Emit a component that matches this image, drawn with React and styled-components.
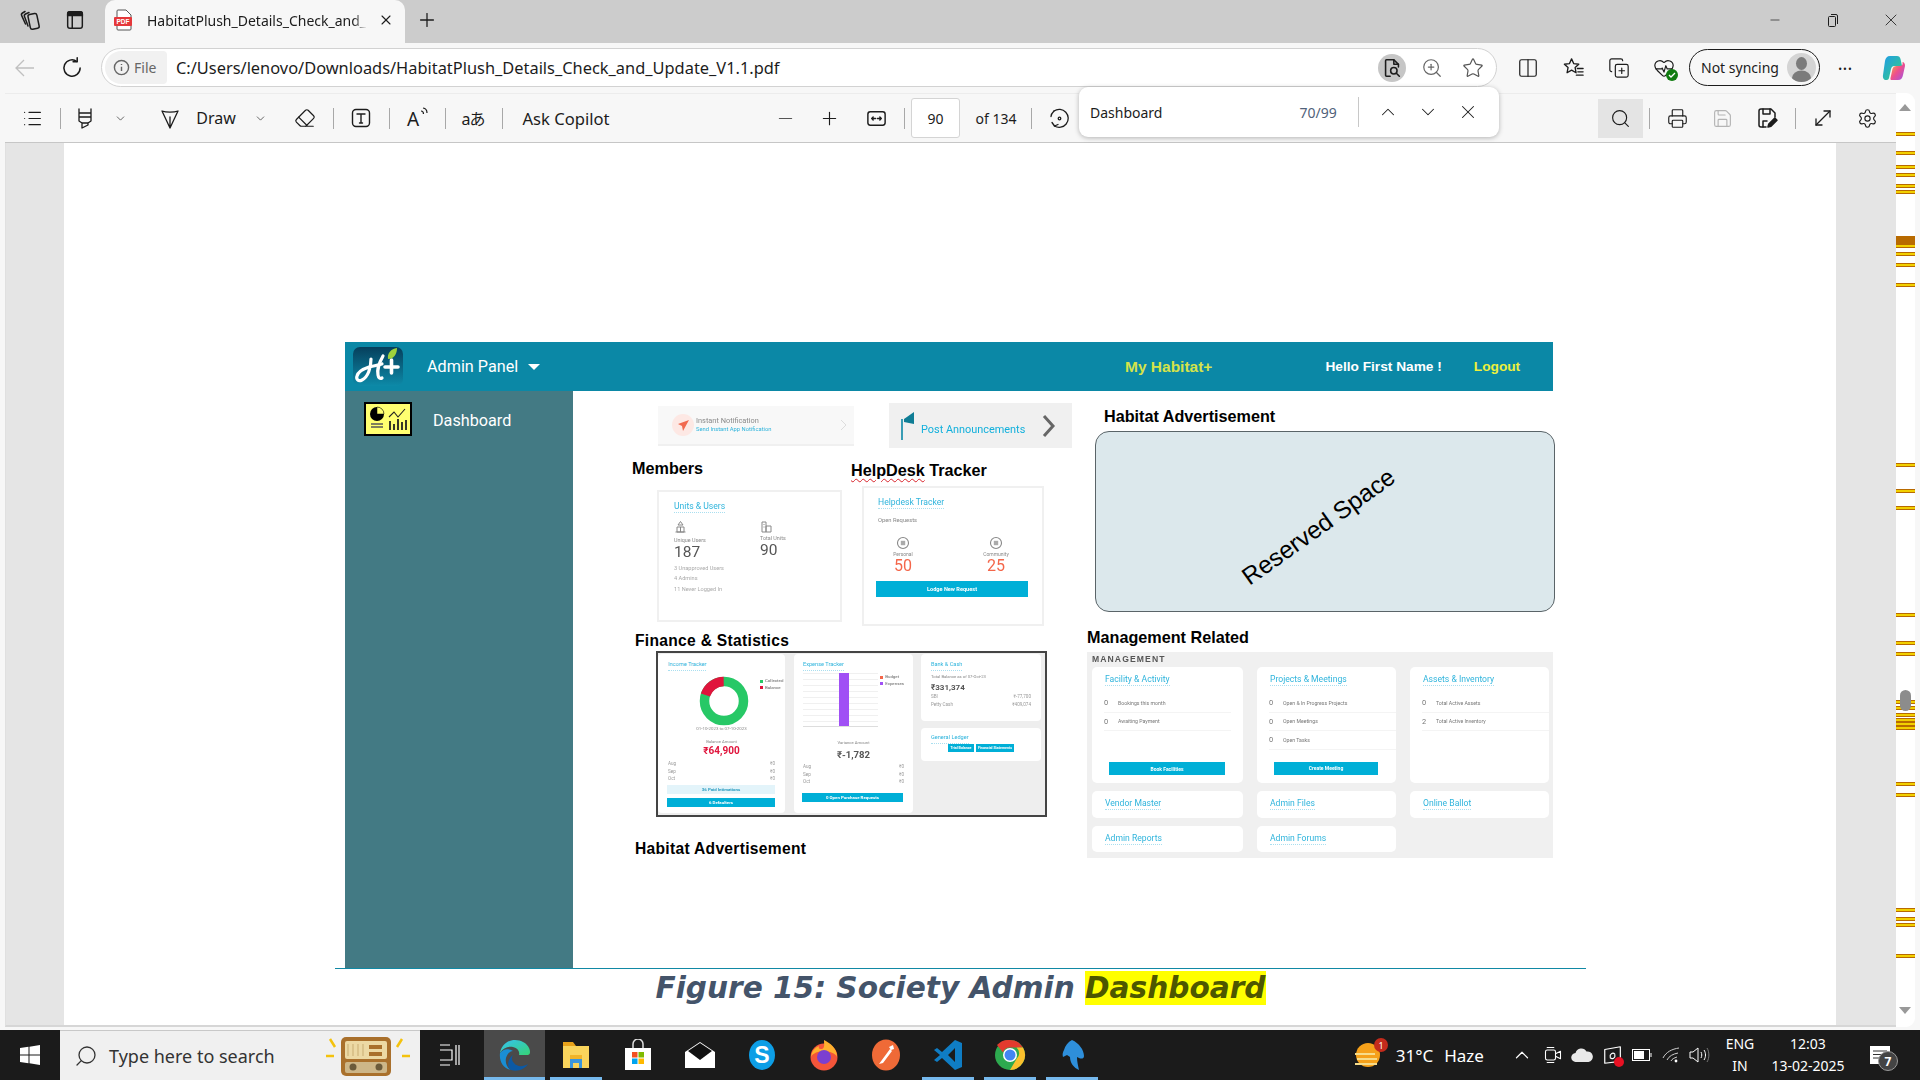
import React from 'react';
import styled, { createGlobalStyle } from 'styled-components';
import {
  ChevronDown, ChevronUp, Columns2, CopyPlus, Eraser, HeartPulse, List, Minus, MoveDiagonal,
  Plus, Printer, Save, Search, Settings, Star, X, ZoomIn,
} from 'lucide-react';

const UI_FONT = '"Noto Sans", "Open Sans", sans-serif';
const DOC_FONT = '"Liberation Sans", Arial, sans-serif';
const APP_FONT = 'Roboto, "Liberation Sans", sans-serif';
const CYAN = '#2fb4dc';
const BUTTON = '#00afd7';

const GlobalStyle = createGlobalStyle`
  html, body { margin: 0; padding: 0; background: #f7f7f7; }
  * { box-sizing: border-box; }
`;

const Screen = styled.div`
  width: 1920px;
  height: 1080px;
  overflow: hidden;
  display: flex;
  flex-direction: column;
  font-family: ${UI_FONT};
  color: #1c1c1c;
  background: #f7f7f7;
`;

const TabStrip = styled.div`
  height: 43px;
  flex: none;
  display: flex;
  align-items: center;
  padding-bottom: 3px;
  background: #cccccc;
`;

const Slot = styled.div`
  flex: none;
  width: ${({ $w }) => $w}px;
  margin-left: ${({ $ml }) => $ml || 0}px;
  display: flex;
  align-items: center;
  justify-content: center;
  color: ${({ $color }) => $color || 'inherit'};
  font-size: ${({ $size }) => $size || 16}px;
  white-space: nowrap;
  position: relative;
`;

const Tab = styled.div`
  width: 300px;
  height: 43px;
  margin: 0 0 -3px 10px;
  background: #f7f7f7;
  border-radius: 10px 10px 0 0;
  display: flex;
  align-items: center;
  padding: 0 0 3px 9px;
`;

const TabTitle = styled.div`
  width: 220px;
  margin-left: 13px;
  overflow: hidden;
  white-space: nowrap;
  font-size: 14px;
  -webkit-mask-image: linear-gradient(90deg, #000 94%, transparent);
  mask-image: linear-gradient(90deg, #000 94%, transparent);
`;

const WindowControls = styled.div`
  margin-left: auto;
  display: flex;
`;

const AddressRow = styled.div`
  height: 50px;
  flex: none;
  display: flex;
  align-items: center;
  padding-bottom: 1px;
`;

const Pill = styled.div`
  flex: none;
  width: 1396px;
  height: 39px;
  margin-left: 8px;
  background: #fff;
  border: 1px solid #d2d2d2;
  border-radius: 20px;
  display: flex;
  align-items: center;
  padding-left: 3px;
`;

const FileChip = styled.div`
  flex: none;
  width: 62px;
  height: 33px;
  border-radius: 17px 4px 4px 17px;
  background: #f1f1f1;
  display: flex;
  align-items: center;
  gap: 4px;
  padding-left: 8px;
  color: #666;
  font-size: 14px;
`;

const Url = styled.div`
  margin-left: 9px;
  font-size: 16.4px;
  white-space: nowrap;
`;

const PillIcons = styled.div`
  margin-left: auto;
  display: flex;
  align-items: center;
  padding-right: 2px;
`;

const ReadIcon = styled.div`
  width: 28px;
  height: 28px;
  border-radius: 50%;
  background: #c6c6c6;
  display: flex;
  align-items: center;
  justify-content: center;
`;

const SyncPill = styled.div`
  flex: none;
  width: 131px;
  height: 37px;
  margin-left: 3px;
  border: 1.5px solid #1c1c1c;
  border-radius: 19px;
  display: flex;
  align-items: center;
  justify-content: space-between;
  padding: 0 3px 0 11px;
  font-size: 14px;
`;

const Avatar = styled.div`
  width: 29px;
  height: 29px;
  border-radius: 50%;
  background: #d4d4d4;
  overflow: hidden;
`;

const Pdf = styled.div`
  margin: 0 5px;
  position: relative;
  flex: 1;
  display: flex;
  min-height: 0;
`;

const PdfMain = styled.div`
  width: 1891px;
  display: flex;
  flex-direction: column;
`;

const Toolbar = styled.div`
  height: 50px;
  flex: none;
  display: flex;
  align-items: center;
  background: #f7f7f7;
  border-top: 1px solid #ececec;
  border-bottom: 1px solid #c6c6c6;
  padding-right: 9px;
`;

const ToolRight = styled.div`
  margin-left: auto;
  display: flex;
  align-items: center;
`;

const Divider = styled.div`
  flex: none;
  width: 1px;
  height: 21px;
  margin-left: ${({ $ml }) => $ml || 0}px;
  background: #a8a8a8;
`;

const PageBox = styled.div`
  flex: none;
  width: 49px;
  height: 40px;
  margin-left: 6px;
  background: #fff;
  border: 1px solid #d4d4d4;
  border-radius: 3px;
  display: flex;
  align-items: center;
  justify-content: center;
  font-size: 14px;
`;

const SearchToggle = styled.div`
  width: 45px;
  height: 39px;
  background: #e4e4e4;
  display: flex;
  align-items: center;
  justify-content: center;
`;

const FindBar = styled.div`
  position: absolute;
  left: 1074px;
  top: -6px;
  width: 420px;
  height: 50px;
  background: #fff;
  border-radius: 9px;
  box-shadow: 0 1px 5px rgba(0, 0, 0, 0.28);
  display: flex;
  align-items: center;
  padding-left: 11px;
  font-size: 14px;
  z-index: 2;
`;

const FindCount = styled.span`
  margin-left: 137px;
  color: #50627a;
`;

const FindDivider = styled.div`
  width: 1px;
  height: 30px;
  margin-left: 21px;
  background: #c8c8c8;
`;

const Viewer = styled.div`
  flex: 1;
  min-height: 0;
  background: #e5e5e5;
  padding: 0 60px 0 58px;
  border-bottom: 2px solid #d6d6d6;
  border-left: 1px solid #e0e0e0;
`;

const Page = styled.div`
  height: 100%;
  background: #fff;
  padding: 199px 0 0 281px;
`;

const Figure = styled.div`
  width: 1208px;
`;

const AppHeader = styled.div`
  height: 49px;
  background: #0b88a6;
  display: flex;
  align-items: center;
  color: #fff;
  font-family: ${APP_FONT};
  padding-left: 7px;
`;

const PanelName = styled.div`
  margin-left: 23px;
  font-size: 16.2px;
  width: 101px;
`;

const Caret = styled.div`
  width: 0;
  height: 0;
  border-left: 6px solid transparent;
  border-right: 6px solid transparent;
  border-top: 6px solid #fff;
`;

const HeaderLink = styled.div`
  font-family: ${DOC_FONT};
  font-weight: 700;
  font-size: ${({ $size }) => $size}px;
  color: ${({ $color }) => $color};
  margin-left: ${({ $ml }) => $ml}px;
  white-space: nowrap;
`;

const AppBody = styled.div`
  height: 577px;
  display: flex;
`;

const Sidebar = styled.div`
  width: 228px;
  background: #437a84;
  padding: 11px 0 0 19px;
  display: flex;
  align-items: flex-start;
  color: #fff;
  font-family: ${APP_FONT};
`;

const SideName = styled.div`
  margin-left: 21px;
  font-size: 16.2px;
  line-height: 37px;
`;

const LeftCol = styled.div`
  width: 514px;
`;

const RightCol = styled.div`
  width: 466px;
  padding-top: 15px;
`;

const QuickRow = styled.div`
  display: flex;
  align-items: flex-start;
  margin: 12px 0 0 85px;
`;

const NotifyCard = styled.div`
  width: 196px;
  height: 40px;
  margin-top: 3px;
  background: #f8f8f8;
  border-bottom: 2px solid #f0f0f0;
  display: flex;
  align-items: center;
  padding-left: 14px;
  font-family: ${APP_FONT};
  filter: blur(0.35px);
`;

const NotifyBadge = styled.div`
  width: 22px;
  height: 22px;
  border-radius: 50%;
  background: #fde8e4;
  display: flex;
  align-items: center;
  justify-content: center;
`;

const NotifyText = styled.div`
  margin-left: 2px;
  flex: 1;
  color: #8a8a8a;
  font-size: 7.4px;
  line-height: 9px;
`;

const NotifySub = styled.div`
  color: ${CYAN};
  font-size: 5.8px;
`;

const PostCard = styled.div`
  width: 183px;
  height: 45px;
  margin-left: 35px;
  background: #f0f0f0;
  display: flex;
  align-items: center;
  padding-left: 12px;
  color: #12b0dc;
  font-family: ${APP_FONT};
  font-size: 10.9px;
  filter: blur(0.25px);
`;

const PostLabel = styled.div`
  margin: 8px 0 0 5px;
  white-space: nowrap;
`;

const Heading = styled.div`
  font-family: ${DOC_FONT};
  font-weight: 700;
  font-size: ${({ $size }) => $size || 16.2}px;
  line-height: 20px;
  color: #000;
  letter-spacing: ${({ $track }) => $track || 0}px;
  white-space: nowrap;
  margin: ${({ $m }) => $m || 0};
`;

const Squiggle = styled.span`
  text-decoration: underline wavy #d8222a 1px;
  text-underline-offset: 2px;
`;

const TrackerRow = styled.div`
  display: flex;
  align-items: flex-start;
  margin: 10px 0 0 59px;
`;

const TrackerCol = styled.div`
  flex: none;
  width: ${({ $w }) => $w}px;
  padding-top: ${({ $top }) => $top}px;
`;

const ShotCard = styled.div`
  width: ${({ $w }) => $w}px;
  height: ${({ $h }) => $h}px;
  margin: ${({ $m }) => $m};
  background: #fff;
  border: 2px solid #f0f0f0;
  font-family: ${APP_FONT};
  color: #555;
  filter: blur(0.3px);
`;

const ShotBody = styled.div`
  padding: 9px ${({ $px }) => $px}px;
`;

const SmallTitle = styled.div`
  font-size: ${({ $size }) => $size || 8.6}px;
  line-height: 11px;
  color: ${CYAN};
  width: fit-content;
  border-bottom: 1px dotted #a9dff0;
  white-space: nowrap;
  margin: ${({ $m }) => $m || 0};
`;

const TinyText = styled.div`
  font-size: ${({ $size }) => $size || 5.6}px;
  line-height: ${({ $lh }) => $lh || 8}px;
  color: ${({ $color }) => $color || '#888'};
  text-align: ${({ $align }) => $align || 'left'};
  white-space: nowrap;
  margin: ${({ $m }) => $m || 0};
`;

const StatPair = styled.div`
  display: flex;
  margin-top: ${({ $top }) => $top}px;
`;

const Stat = styled.div`
  flex: none;
  width: ${({ $w }) => $w}px;
  margin-left: ${({ $ml }) => $ml || 0}px;
  display: flex;
  flex-direction: column;
  align-items: ${({ $center }) => ($center ? 'center' : 'flex-start')};
`;

const BigNumber = styled.div`
  font-size: ${({ $size }) => $size}px;
  line-height: ${({ $lh, $size }) => $lh || $size + 1}px;
  color: ${({ $color }) => $color || '#555'};
  font-weight: ${({ $bold }) => ($bold ? 700 : 400)};
  text-align: ${({ $align }) => $align || 'left'};
  margin-top: ${({ $top }) => $top || 0}px;
`;

const ActionBar = styled.div`
  height: ${({ $h }) => $h}px;
  margin: ${({ $m }) => $m};
  background: ${({ $light }) => ($light ? '#e3f4fa' : BUTTON)};
  color: ${({ $light }) => ($light ? '#2a9cc0' : '#fff')};
  font-size: ${({ $size }) => $size || 5}px;
  font-weight: 700;
  display: flex;
  align-items: center;
  justify-content: center;
  white-space: nowrap;
`;

const FinanceBox = styled.div`
  width: 391px;
  height: 166px;
  margin: 0 0 0 83px;
  border: 2px solid #444;
  background: #eeeeee;
  padding: 1px 0;
  display: flex;
  gap: 9px;
  font-family: ${APP_FONT};
`;

const FinanceCard = styled.div`
  flex: none;
  width: ${({ $w }) => $w}px;
  height: ${({ $h }) => $h || 159}px;
  background: #fff;
  border-radius: 4px;
  padding: ${({ $p }) => $p || '5px 10px'};
  filter: blur(0.35px);
  color: #666;
`;

const FinanceStack = styled.div`
  display: flex;
  flex-direction: column;
  gap: 7px;
  margin-left: -1px;
`;

const ChartRow = styled.div`
  display: flex;
  align-items: flex-start;
  margin-top: ${({ $top }) => $top || 0}px;
`;

const DonutSlot = styled.div`
  flex: none;
  width: 88px;
  margin: 5px 0 0 12px;
  display: flex;
  justify-content: center;
`;

const LegendStack = styled.div`
  margin: ${({ $m }) => $m};
`;

const Legend = styled.div`
  display: flex;
  align-items: center;
  gap: 2px;
  font-size: 4.4px;
  line-height: 6.5px;
  color: #666;
`;

const Swatch = styled.span`
  width: 3px;
  height: 3px;
  background: ${({ $color }) => $color};
`;

const Gridlines = styled.div`
  width: 81px;
  height: 54px;
  display: flex;
  justify-content: center;
  background: repeating-linear-gradient(180deg, #f0f0f0 0 1px, #fff 1px 6px);
  border-bottom: 1px solid #ddd;
`;

const ExpenseBar = styled.div`
  width: 10px;
  margin-left: 7px;
  background: #a050f5;
`;

const LineRows = styled.div`
  margin-top: ${({ $top }) => $top}px;
`;

const LineRow = styled.div`
  display: flex;
  justify-content: space-between;
  font-size: 4.6px;
  line-height: ${({ $lh }) => $lh || 7.7}px;
  color: #999;
`;

const LedgerButtons = styled.div`
  display: flex;
  justify-content: center;
  gap: 2px;
`;

const LedgerButton = styled.div`
  width: ${({ $w }) => $w}px;
  height: 8px;
  background: ${BUTTON};
  color: #fff;
  font-size: 3.6px;
  font-weight: 700;
  display: flex;
  align-items: center;
  justify-content: center;
  white-space: nowrap;
`;

const ReservedBox = styled.div`
  width: 460px;
  height: 181px;
  margin: 5px 0 0 8px;
  background: #dce8ec;
  border: 1.5px solid #5a6468;
  border-radius: 14px;
  display: flex;
  align-items: center;
  justify-content: center;
`;

const ReservedText = styled.div`
  font-family: ${DOC_FONT};
  font-size: 24.5px;
  color: #000;
  white-space: nowrap;
  transform: translate(-6px, 5px) rotate(-35.5deg);
`;

const ManageBox = styled.div`
  width: 466px;
  height: 206px;
  margin-top: 5px;
  background: #f0f0f0;
  padding: 0 5px;
  font-family: ${APP_FONT};
  color: #666;
`;

const ManageTitle = styled.div`
  font-family: ${DOC_FONT};
  font-weight: 700;
  font-size: 8.6px;
  letter-spacing: 1.1px;
  line-height: 15px;
  color: #555;
  filter: blur(0.3px);
`;

const ManageGrid = styled.div`
  display: grid;
  grid-template-columns: 151px 139px 139px;
  grid-template-rows: 116px 27px 26px;
  column-gap: 14px;
  row-gap: 8px;
  filter: blur(0.35px);
`;

const ManageCard = styled.div`
  background: #fff;
  border-radius: 5px;
  padding: 7px 13px;
`;

const ManageLine = styled.div`
  display: flex;
  align-items: center;
  height: 18.5px;
  margin: ${({ $first }) => ($first ? '8px' : '0')} 0 0 -1px;
  border-bottom: 1px solid #f4f4f4;
  width: 127px;
`;

const ManageNum = styled.span`
  width: 14px;
  font-size: 7.4px;
  color: #777;
`;

const ManageLabel = styled.span`
  font-size: 5.2px;
  color: #777;
`;

const Rule = styled.div`
  width: 1251px;
  height: 1px;
  margin-left: -10px;
  background: #1189a5;
`;

const Caption = styled.div`
  width: 1251px;
  margin: 0 0 0 -10px;
  text-align: center;
  font-family: "DejaVu Sans", Verdana, sans-serif;
  font-weight: 700;
  font-style: italic;
  font-size: 29.6px;
  line-height: 38px;
  color: #44546a;
`;

const Mark = styled.mark`
  background: #ffff00;
  color: #4d5700;
`;

const Scrollbar = styled.div`
  width: 19px;
  background: #fff;
  border-radius: 0 9px 9px 0;
  position: relative;
`;

const ScrollMark = styled.div`
  position: absolute;
  left: 0;
  width: 19px;
  height: ${({ $thick }) => ($thick ? 8 : 4)}px;
  background: ${({ $thick }) => ($thick ? '#b86a00' : '#f2d000')};
  border-top: 1px solid #b86a00;
  border-bottom: 1px solid #b86a00;
`;

const ScrollThumb = styled.div`
  position: absolute;
  left: 4px;
  top: 597px;
  width: 11px;
  height: 21px;
  background: #8c8c8c;
  border-radius: 6px;
`;

const ScrollArrow = styled.div`
  position: absolute;
  left: 3px;
  top: ${({ $top }) => $top}px;
  width: 0;
  height: 0;
  border-left: 6.5px solid transparent;
  border-right: 6.5px solid transparent;
  border-top: ${({ $down }) => ($down ? '7px solid #999' : 'none')};
  border-bottom: ${({ $down }) => ($down ? 'none' : '7px solid #999')};
`;

const Taskbar = styled.div`
  height: 50px;
  flex: none;
  margin-top: 3px;
  display: flex;
  background: #1b1b1b;
  color: #fff;
`;

const TaskSearch = styled.div`
  width: 360px;
  background: #f0f0f0;
  border-top: 1px solid #c8c8c8;
  color: #333;
  display: flex;
  align-items: center;
  padding-left: 14px;
  font-size: 18px;
`;

const SearchGlass = styled.div`
  display: flex;
  transform: scaleX(-1);
`;

const SearchHint = styled.div`
  margin-left: 11px;
  width: 211px;
  white-space: nowrap;
`;

const TaskApp = styled.div`
  flex: none;
  width: ${({ $w }) => $w || 62}px;
  padding-right: ${({ $pr }) => $pr || 0}px;
  display: flex;
  align-items: center;
  justify-content: center;
  position: relative;
  background: ${({ $active }) => ($active ? '#4a4a4a' : 'transparent')};

  &::after {
    content: '';
    display: ${({ $open }) => ($open ? 'block' : 'none')};
    position: absolute;
    left: ${({ $active }) => ($active ? 0 : 5)}px;
    right: ${({ $active }) => ($active ? 0 : 5)}px;
    bottom: 0;
    height: 3px;
    background: #76b9ed;
  }
`;

const Tray = styled.div`
  margin-left: auto;
  display: flex;
  align-items: center;
  padding-right: 20px;
`;

const TraySlot = styled.div`
  margin-left: ${({ $ml }) => $ml}px;
`;

const Lang = styled.div`
  flex: none;
  margin-left: ${({ $ml }) => $ml}px;
  width: ${({ $w }) => $w}px;
  text-align: center;
  font-size: 14px;
  line-height: 22px;
`;

const NotifyCount = styled.div`
  position: absolute;
  right: 2px;
  bottom: -7px;
  width: 20px;
  height: 20px;
  border-radius: 50%;
  background: #444;
  border: 1px solid #999;
  font-size: 12px;
  font-weight: 700;
  display: flex;
  align-items: center;
  justify-content: center;
`;

const WeatherBadge = styled.div`
  position: absolute;
  right: -5px;
  top: -3px;
  width: 14px;
  height: 14px;
  border-radius: 50%;
  background: #c42b1c;
  color: #fff;
  font-size: 9px;
  display: flex;
  align-items: center;
  justify-content: center;
`;

const CornerDot = styled.svg`
  position: absolute;
  right: ${({ $r }) => $r}px;
  bottom: ${({ $b }) => $b}px;
`;

const TranslateGlyph = styled.span`
  font-family: ${UI_FONT}, "Noto Sans CJK JP", sans-serif;
  font-size: 16px;
  letter-spacing: -1px;
`;

const Stroke = ({ size = 22, width = 1.3, children, view = '0 0 24 24' }) => (
  <svg width={size} height={size} viewBox={view} fill="none" stroke="currentColor" strokeWidth={width} strokeLinecap="round" strokeLinejoin="round">
    {children}
  </svg>
);

const Thin = ({ icon: Icon, size = 21, color }) => <Icon size={size} strokeWidth={1.3} color={color || 'currentColor'} />;

const WorkspacesIcon = () => (
  <Stroke size={24} width={1.5}>
    <rect x="11" y="6" width="9" height="15" rx="2" transform="rotate(-12 15 13)" />
    <path d="M11 4.5 7.5 6a2 2 0 0 0-1 2.6L10 18" />
    <path d="M7 3.5 4.5 5a2 2 0 0 0-.8 2.6L7.5 16" />
  </Stroke>
);

const VerticalTabsIcon = () => (
  <svg width="22" height="22" viewBox="0 0 24 24" fill="none" stroke="#1c1c1c" strokeWidth="1.6">
    <rect x="4" y="3" width="16" height="18" rx="2.5" />
    <path d="M4 7h16V5a2 2 0 0 0-2-2H6a2 2 0 0 0-2 2z" fill="#1c1c1c" />
    <path d="M9 7v14" />
  </svg>
);

const PdfIcon = () => (
  <svg width="20" height="22" viewBox="0 0 20 22">
    <path d="M4 1h8l5 5v14a1 1 0 0 1-1 1H4a1 1 0 0 1-1-1V2a1 1 0 0 1 1-1z" fill="#fff" stroke="#555" />
    <rect x="0" y="8" width="18" height="9" rx="1" fill="#e5383b" />
    <text x="9" y="15" textAnchor="middle" fontSize="6.5" fontWeight="700" fill="#fff" fontFamily={DOC_FONT}>PDF</text>
  </svg>
);

const RefreshIcon = () => (
  <Stroke size={26} width={1.4}>
    <path d="M19.5 12a7.5 7.5 0 1 1-3-6" />
    <path d="M16.8 2.5V6.3H13" />
  </Stroke>
);

const BackIcon = () => (
  <svg width="24" height="24" viewBox="0 0 24 24" fill="none" stroke="#c0c0c0" strokeWidth="1.3">
    <path d="M21 12H3M11 4l-8 8 8 8" />
  </svg>
);

const InfoIcon = () => (
  <svg width="17" height="17" viewBox="0 0 24 24" fill="none" stroke="#666" strokeWidth="2">
    <circle cx="12" cy="12" r="10" />
    <path d="M12 11v6M12 7v1.5" />
  </svg>
);

const ReadDocIcon = () => (
  <Stroke size={22} width={1.7}>
    <path d="M10 21H6a1 1 0 0 1-1-1V4a1 1 0 0 1 1-1h8l5 5v3" />
    <path d="M14 3v5h5" />
    <circle cx="14" cy="15" r="3.5" />
    <path d="m17 18 3 3" />
  </Stroke>
);

const FavoritesIcon = () => (
  <Stroke size={23} width={1.4}>
    <path d="m10 3 2.3 5 5.2.6-3.8 3.5 1 5.4-4.7-2.7L5.3 17.5l1-5.4-3.8-3.5 5.2-.6z" />
    <path d="M16 13h6M16.5 16.5H22M15 20h7" />
  </Stroke>
);

const HealthIcon = () => (
  <Slot $w={24}>
    <HeartPulse size={22} strokeWidth={1.3} />
    <CornerDot $r={-2} $b={-2} width="12" height="12" viewBox="0 0 12 12">
      <circle cx="6" cy="6" r="6" fill="#107c10" />
      <path d="m3 6 2 2 4-4" stroke="#fff" strokeWidth="1.3" fill="none" />
    </CornerDot>
  </Slot>
);

const AvatarFigure = () => (
  <svg width="29" height="29" viewBox="0 0 29 29">
    <ellipse cx="14.5" cy="10.5" rx="5.5" ry="6.5" fill="#7b7b7b" />
    <ellipse cx="14.5" cy="25" rx="9.5" ry="7.5" fill="#7b7b7b" />
  </svg>
);

const CopilotIcon = () => (
  <svg width="28" height="28" viewBox="0 0 28 28">
    <defs>
      <linearGradient id="copA" x1="0" y1="0" x2="1" y2="1">
        <stop offset="0" stopColor="#1f9ce8" />
        <stop offset="1" stopColor="#38d27c" />
      </linearGradient>
      <linearGradient id="copB" x1="0" y1="0" x2="1" y2="1">
        <stop offset="0" stopColor="#f7b733" />
        <stop offset="0.5" stopColor="#ee4f8c" />
        <stop offset="1" stopColor="#9b54e8" />
      </linearGradient>
    </defs>
    <path d="M11 2h7c2 0 3 1 3.5 3l2 9c-1-1.500-2-2-4-2h-4c-2 0-3 1-3.500 3l-2 9c-.5 2-2 2-3 2-2 0-3.500-2-3-5l2-14C6.500 4 8 2 11 2z" fill="url(#copA)" />
    <path d="M12 26h7c3 0 4.500-2 5-5l2-9c.3-2-1-4-2.500-4 .5 3-.5 4-3 4h-3c-2 0-3.500 1-4 3l-2 9c-.3 1.500.5 2 .5 2z" fill="url(#copB)" />
  </svg>
);

const HighlighterIcon = () => (
  <Stroke size={24}>
    <path d="M6 3v8h12V3M6 11v4l3 2h6l3-2v-4M9 17v5l6-3v-2M6 7h12" />
  </Stroke>
);

const DrawIcon = () => (
  <Stroke size={24}>
    <path d="M4 5c4 1.500 12 1.500 16 0l-8 17zM12 11v11" />
  </Stroke>
);

const TextBoxIcon = () => (
  <Stroke size={24} width={1.4}>
    <rect x="3.500" y="3.500" width="17" height="17" rx="3.500" />
    <path d="M8 8h8M12 8v9M10.500 17h3" />
  </Stroke>
);

const ReadAloudIcon = () => (
  <svg width="30" height="26" viewBox="0 0 30 26" fill="none" stroke="#1c1c1c" strokeWidth="1.2">
    <text x="4" y="21" fontSize="19" stroke="none" fill="#1c1c1c" fontFamily={UI_FONT}>A</text>
    <path d="M18 6c1.500 0 2.500 1 2.500 3M20 3c2.500.3 4 2 4 5" />
  </svg>
);

const FitIcon = () => (
  <Stroke size={23} width={1.5}>
    <rect x="3" y="5" width="18" height="14" rx="2.500" />
    <path d="M7 12h4M7 12l1.500-1.500M7 12l1.500 1.500M17 12h-4M17 12l-1.500-1.500M17 12l-1.500 1.500" />
  </Stroke>
);

const RotateIcon = () => (
  <Stroke size={24}>
    <path d="M7 5a9 9 0 1 1 .5 15" />
    <path d="M5 16.500 7.500 20l3.500-1.500" />
    <path d="M7 5C5.500 6.500 4 8.500 4 10.500" />
    <circle cx="12.500" cy="12.500" r="1.300" />
  </Stroke>
);

const SaveAsIcon = () => (
  <Stroke size={24} width={1.5}>
    <path d="M11 21H6a2 2 0 0 1-2-2V5a2 2 0 0 1 2-2h10l4 4v4" />
    <path d="M8 3v5h7V3M8 21v-6h4" />
    <path d="m13 21 .8-3 6-6 2.200 2.200-6 6z" fill="currentColor" />
  </Stroke>
);

const HLogo = () => (
  <svg width="52" height="41" viewBox="0 0 52 41">
    <defs>
      <linearGradient id="logoFill" x1="0" y1="0" x2="0" y2="1">
        <stop offset="0" stopColor="#063f5c" />
        <stop offset="1" stopColor="#0d8aa8" />
      </linearGradient>
    </defs>
    <rect x="1" y="1" width="50" height="39" rx="7" fill="url(#logoFill)" />
    <g fill="none" stroke="#fff" strokeWidth="3.2" strokeLinecap="round">
      <path d="M19 13c0 9-3 18-9 21-4 2-6-1-5-4 1-4 6-7 12-9 5-1 9-2 13-3" />
      <path d="M31 10c-4 7-6 15-5 19 .5 3 2 4 4 3" />
      <path d="M33 21h13M39.500 14v13" strokeWidth="3.6" />
    </g>
    <path d="M36 13c-1-6 3-10 9-11 0 6-3 11-9 11z" fill="#9fd23c" />
  </svg>
);

const DashIcon = () => (
  <svg width="48" height="34" viewBox="0 0 48 34">
    <rect x="1" y="1" width="46" height="32" fill="#ffff70" stroke="#000" strokeWidth="2" />
    <circle cx="13" cy="12" r="7" fill="#000" />
    <path d="M13 12V5a7 7 0 0 1 7 7z" fill="#ffff70" stroke="#000" strokeWidth="0.5" />
    <path d="M7 22h12M7 25h12" stroke="#555" strokeWidth="1.5" />
    <path d="M26 19v9M30 22v6M34 17v11M38 20v8M42 18v10" stroke="#222" strokeWidth="1.8" />
    <path d="m25 15 5-5 4 5 7-8" stroke="#222" strokeWidth="1.1" fill="none" />
  </svg>
);

const PlaneIcon = () => (
  <svg width="13" height="13" viewBox="0 0 13 13">
    <path d="M12 1 1 5l4 2 1 5z" fill="#f1694f" />
  </svg>
);

const FlagIcon = () => (
  <svg width="15" height="31" viewBox="0 0 15 31">
    <path d="M1 9v21" stroke="#0b88a6" strokeWidth="1.6" />
    <path d="m3 9 10-7v12l-10-2z" fill="#0f7d95" />
  </svg>
);

const BigChevron = () => (
  <svg width="14" height="24" viewBox="0 0 14 24" fill="none" stroke="#666" strokeWidth="3">
    <path d="m2 2 9 10-9 10" />
  </svg>
);

const TinyChevron = () => (
  <svg width="7" height="12" viewBox="0 0 7 12" fill="none" stroke="#ddd" strokeWidth="1">
    <path d="m1 1 5 5-5 5" />
  </svg>
);

const BuildingIcon = ({ kind }) => (
  <svg width="13" height="13" viewBox="0 0 13 13" fill="none" stroke="#888" strokeWidth="1">
    {kind === 'users'
      ? <path d="M6.500 1.500 4 5h5zM3 7h7v5H3zM6.500 7v5M1.500 12h10" />
      : <path d="M2 2h4v10H2zM6 6h5v6H6zM3.500 4.500h1M3.500 7h1" />}
  </svg>
);

const RingIcon = () => (
  <svg width="14" height="14" viewBox="0 0 14 14" fill="none" stroke="#888" strokeWidth="1.1">
    <circle cx="7" cy="7" r="5.500" />
    <rect x="4.800" y="4.800" width="4.400" height="4.400" fill="#aaa" stroke="none" />
  </svg>
);

const Donut = () => (
  <svg width="50" height="50" viewBox="0 0 50 50" fill="none" strokeWidth="9.500">
    <circle cx="25" cy="25" r="19.500" stroke="#27c866" />
    <circle cx="25" cy="25" r="19.500" stroke="#e0143c" strokeDasharray="24 99" transform="rotate(-162 25 25)" />
  </svg>
);

const WindowsLogo = () => (
  <svg width="20" height="20" viewBox="0 0 20 20" fill="#fff">
    <path d="M0 3l8.500-1.200v7.700H0zM9.500 1.700 20 0v9.500H9.500zM0 10.500h8.500v7.700L0 17zM9.500 10.500H20V20L9.500 18.300z" />
  </svg>
);

const RadioDoodle = () => (
  <svg width="92" height="44" viewBox="0 0 92 44">
    <path d="M6 22h8M82 22h8M10 5l5 8M82 5l-5 8" stroke="#f4c20d" strokeWidth="2.500" />
    <rect x="21" y="3" width="50" height="39" rx="5" fill="#a9702c" />
    <rect x="25" y="7" width="42" height="18" rx="2" fill="#ecd9a4" />
    <path d="M28 10v12M33 10v12M38 10v12M43 10v12" stroke="#c9ad72" />
    <rect x="49" y="11" width="13" height="4" fill="#a9702c" />
    <rect x="49" y="18" width="13" height="4" fill="#a9702c" />
    <rect x="25" y="28" width="42" height="11" rx="2" fill="#cdb688" />
    <circle cx="33" cy="33" r="3.500" fill="#6b5a3a" />
    <circle cx="59" cy="33" r="3.500" fill="#6b5a3a" />
  </svg>
);

const EdgeLogo = () => (
  <svg width="32" height="32" viewBox="0 0 32 32">
    <defs>
      <linearGradient id="edgeA" x1="0" y1="0" x2="1" y2="1">
        <stop offset="0" stopColor="#35c1f1" />
        <stop offset="1" stopColor="#36d475" />
      </linearGradient>
    </defs>
    <path d="M16 1C8 1 2 7 1 14c3-5 8-7 13-6 5 1 7 5 6 8h9c3-1 2-5 1-7-2-5-8-8-14-8z" fill="url(#edgeA)" />
    <path d="M1 14c-1 8 3 15 11 17-4-2-6-7-5-12 1-4 4-7 7-7-5-3-10-2-13 2z" fill="#1a8ed4" />
    <path d="M12 31c7 2 14-1 17-6-5 3-11 3-14-1-2-2-3-5-1-8-5 3-7 12-2 15z" fill="#0c59a4" />
  </svg>
);

const FolderLogo = () => (
  <svg width="30" height="30" viewBox="0 0 30 30">
    <path d="M2 2h10l3 4H2z" fill="#e8a21a" />
    <rect x="2" y="6" width="26" height="22" fill="#f9d45c" />
    <path d="M9 28v-9h12v9h-3v-5h-6v5z" fill="#3a96dd" />
    <rect x="9" y="15" width="12" height="4" fill="#f0b429" />
  </svg>
);

const StoreLogo = () => (
  <svg width="30" height="32" viewBox="0 0 30 32">
    <path d="M10 9V5a5 5 0 0 1 10 0v4" fill="none" stroke="#ddd" strokeWidth="1.500" />
    <rect x="2" y="9" width="26" height="22" fill="#fff" />
    <rect x="9" y="13" width="5.500" height="5.500" fill="#f25022" />
    <rect x="15.500" y="13" width="5.500" height="5.500" fill="#7fba00" />
    <rect x="9" y="19.500" width="5.500" height="5.500" fill="#00a4ef" />
    <rect x="15.500" y="19.500" width="5.500" height="5.500" fill="#ffb900" />
  </svg>
);

const MailLogo = () => (
  <svg width="32" height="30" viewBox="0 0 32 30">
    <path d="M16 2 1 12v16h30V12z" fill="#fff" />
    <path d="m4 11 12-8 12 8-12 9z" fill="#111" />
  </svg>
);

const SkypeLogo = () => (
  <svg width="30" height="32" viewBox="0 0 30 32">
    <ellipse cx="15" cy="16" rx="13" ry="15" fill="#0d9ee6" />
    <text x="15" y="24" textAnchor="middle" fontFamily={DOC_FONT} fontWeight="700" fontSize="23" fill="#fff">S</text>
  </svg>
);

const FirefoxLogo = () => (
  <svg width="30" height="32" viewBox="0 0 30 32">
    <circle cx="15" cy="18" r="13.500" fill="#f4553a" />
    <path d="M2 18C3 10 8 8 10 7c-1 3 1 3 3 3 3-1 2-5 2-9 6 3 13 8 13 17-3-7-22-8-26 0z" fill="#ffb02e" />
    <circle cx="15" cy="18" r="7" fill="#7b3fd0" />
  </svg>
);

const PostmanLogo = () => (
  <svg width="30" height="32" viewBox="0 0 30 32">
    <ellipse cx="15" cy="16" rx="14" ry="15.500" fill="#ef6a37" />
    <path d="m8 25 11-15 2 2-9 12zM18 8l4-2 1 4-3 1z" fill="#fff" />
  </svg>
);

const CodeLogo = () => (
  <svg width="30" height="32" viewBox="0 0 30 32">
    <path d="m22 1 7 3v24l-7 3L9 19l-5 4-3-2 6-5-6-5 3-2 5 4zm0 8-7 7 7 7z" fill="#0f7dc4" />
  </svg>
);

const ChromeLogo = () => (
  <svg width="32" height="32" viewBox="0 0 32 32">
    <circle cx="16" cy="16" r="15" fill="#2da94f" />
    <path d="M16 1a15 15 0 0 1 13 7.500H16a7.500 7.500 0 0 0-7 5L3 6a15 15 0 0 1 13-5z" fill="#e33b2e" />
    <path d="M29 8.500A15 15 0 0 1 16 31l6.500-11a7.500 7.500 0 0 0 0-11.500z" fill="#fbc02d" />
    <circle cx="16" cy="16" r="7" fill="#fff" />
    <circle cx="16" cy="16" r="5.500" fill="#4285f4" />
  </svg>
);

const DolphinLogo = () => (
  <svg width="30" height="32" viewBox="0 0 30 32">
    <path d="M15 1c7 3 12 10 12 16 0 3-3 3-5 2l-2-1c0 4 1 9 2 13-5-2-9-7-9-13l-3-2-4 2c-1-3 0-5 1-7C8 7 11 3 15 1z" fill="#2e8fdb" />
  </svg>
);

const WeatherIcon = () => (
  <Slot $w={28}>
    <svg width="28" height="28" viewBox="0 0 28 28">
      <circle cx="13" cy="14" r="12" fill="#f6a11a" />
      <path d="M0 13h20M2 18h20M0 23h22" stroke="#f7dc8a" strokeWidth="2" />
    </svg>
    <WeatherBadge>1</WeatherBadge>
  </Slot>
);

const MeetIcon = () => (
  <Stroke size={20} width={1.3}>
    <rect x="3" y="6" width="12" height="12" rx="2" />
    <path d="m15 10.500 6-3v9l-6-3M5 3h8M5 21h8" />
  </Stroke>
);

const CloudIcon = () => (
  <svg width="22" height="14" viewBox="0 0 22 14">
    <path d="M5 14a4.500 4.500 0 0 1-.5-9 6 6 0 0 1 11-1.500A5 5 0 0 1 17.500 14z" fill="#e8e8e8" />
  </svg>
);

const MeterIcon = () => (
  <Slot $w={24}>
    <Stroke size={22} width={1.3}>
      <path d="M3 6l17-3v16l-17 2zM9 14a3 3 0 0 1 5-3M14 12a3 3 0 0 1-5 3" />
    </Stroke>
    <CornerDot $r={1} $b={-1} width="10" height="10" viewBox="0 0 10 10">
      <circle cx="5" cy="5" r="5" fill="#e81123" />
    </CornerDot>
  </Slot>
);

const BatteryIcon = () => (
  <svg width="20" height="12" viewBox="0 0 20 12" fill="none" stroke="#fff" strokeWidth="1">
    <rect x="0.500" y="0.500" width="17" height="11" />
    <rect x="2" y="2" width="10" height="8" fill="#fff" stroke="none" />
    <path d="M19 4v4" />
  </svg>
);

const WifiIcon = () => (
  <svg width="20" height="18" viewBox="0 0 20 18" fill="none" stroke="#cfcfcf" strokeWidth="1">
    <path d="M1 12C4 6 10 3 17 2M5 14c2-4 6-6 11-7M9 15c1-2 3-3 6-4" />
    <circle cx="14" cy="15" r="1.400" fill="#fff" stroke="none" />
  </svg>
);

const SpeakerIcon = () => (
  <svg width="22" height="18" viewBox="0 0 22 18" fill="none" stroke="#fff" strokeWidth="1">
    <path d="M1 6h3l5-4v14l-5-4H1z" />
    <path d="M12 6c1 2 1 4 0 6M15 4c2 3 2 7 0 10" />
    <path d="M18 2c2.500 4 2.500 10 0 14" stroke="#777" />
  </svg>
);

const NoteIcon = () => (
  <svg width="20" height="18" viewBox="0 0 20 18">
    <rect width="20" height="18" fill="#fff" />
    <path d="M3 5h14M3 8.500h14M3 12h9" stroke="#333" />
  </svg>
);

const TASK_APPS = [
  { id: 'edge', logo: <EdgeLogo />, open: true, active: true, w: 61 },
  { id: 'files', logo: <FolderLogo />, open: true },
  { id: 'store', logo: <StoreLogo /> },
  { id: 'mail', logo: <MailLogo /> },
  { id: 'skype', logo: <SkypeLogo /> },
  { id: 'firefox', logo: <FirefoxLogo /> },
  { id: 'postman', logo: <PostmanLogo /> },
  { id: 'code', logo: <CodeLogo />, open: true },
  { id: 'chrome', logo: <ChromeLogo />, open: true },
  { id: 'mysql', logo: <DolphinLogo />, open: true },
];

// y of the find-result ticks, from the top of the scrollbar
const SCROLL_MARKS = [39, 58, 72, 80, 91, 97, 143, 151, 159, 170, 190, 370, 396, 413, 520, 548, 559, 607, 613, 620, 625, 629, 633, 689, 700, 815, 824, 830, 861];

function Toolbars () {
  return (
    <Toolbar>
      <Slot $w={55}><Thin icon={List} /></Slot>
      <Divider />
      <Slot $w={48}><HighlighterIcon /></Slot>
      <Slot $w={22}><ChevronDown size={13} strokeWidth={1.2} /></Slot>
      <Slot $w={40} $ml={19}><DrawIcon /></Slot>
      <Slot $w={40} $ml={6}>Draw</Slot>
      <Slot $w={22} $ml={13}><ChevronDown size={13} strokeWidth={1.2} /></Slot>
      <Slot $w={40} $ml={14}><Thin icon={Eraser} size={22} /></Slot>
      <Divider $ml={8} />
      <Slot $w={40} $ml={7}><TextBoxIcon /></Slot>
      <Divider $ml={8} />
      <Slot $w={40} $ml={8}><ReadAloudIcon /></Slot>
      <Divider $ml={7} />
      <Slot $w={40} $ml={7}><TranslateGlyph>aあ</TranslateGlyph></Slot>
      <Divider $ml={9} />
      <Slot $w={90} $ml={18} $size={16.6}>Ask Copilot</Slot>
      <Slot $w={40} $ml={154} $color="#555"><Thin icon={Minus} /></Slot>
      <Slot $w={40} $ml={4}><Thin icon={Plus} /></Slot>
      <Slot $w={40} $ml={7}><FitIcon /></Slot>
      <Divider $ml={8} />
      <PageBox>90</PageBox>
      <Slot $w={44} $ml={14} $size={14}>of 134</Slot>
      <Divider $ml={13} />
      <Slot $w={40} $ml={7}><RotateIcon /></Slot>
      <ToolRight>
        <SearchToggle><Thin icon={Search} /></SearchToggle>
        <Divider $ml={6} />
        <Slot $w={40} $ml={7}><Thin icon={Printer} /></Slot>
        <Slot $w={40} $ml={5} $color="#b4b4b4"><Thin icon={Save} /></Slot>
        <Slot $w={40} $ml={5}><SaveAsIcon /></Slot>
        <Divider $ml={8} />
        <Slot $w={40} $ml={7}><Thin icon={MoveDiagonal} size={24} /></Slot>
        <Slot $w={40} $ml={4}><Thin icon={Settings} /></Slot>
      </ToolRight>
    </Toolbar>
  );
}

function FinanceSection () {
  return (
    <FinanceBox>
      <FinanceCard $w={127}>
        <SmallTitle $size={5.6}>Income Tracker</SmallTitle>
        <ChartRow>
          <DonutSlot><Donut /></DonutSlot>
          <LegendStack $m="7px 0 0 -8px">
            <Legend><Swatch $color="#27c866" />Collected</Legend>
            <Legend><Swatch $color="#e0143c" />Balance</Legend>
          </LegendStack>
        </ChartRow>
        <TinyText $size={4.4} $lh={6} $align="center" $m="0">01-10-2023 to 07-10-2023</TinyText>
        <TinyText $size={4.2} $lh={6} $align="center" $m="7px 0 0">Balance Amount</TinyText>
        <BigNumber $size={10} $lh={12} $color="#e0143c" $bold $align="center">₹64,900</BigNumber>
        <LineRows $top={3}>
          <LineRow><span>Aug</span><span>₹0</span></LineRow>
          <LineRow><span>Sep</span><span>₹0</span></LineRow>
          <LineRow><span>Oct</span><span>₹0</span></LineRow>
        </LineRows>
        <ActionBar $light $h={9} $size={4.4} $m="2px 0 0 -1px">36 Paid Intimations</ActionBar>
        <ActionBar $h={9} $size={4.4} $m="4px 0 0 -1px">6 Defaulters</ActionBar>
      </FinanceCard>
      <FinanceCard $w={119} $p="5px 9px">
        <SmallTitle $size={5.6}>Expense Tracker</SmallTitle>
        <ChartRow $top={2}>
          <Gridlines><ExpenseBar /></Gridlines>
          <LegendStack $m="1px 0 0 2px">
            <Legend><Swatch $color="#f4664a" />Budget</Legend>
            <Legend><Swatch $color="#a050f5" />Expenses</Legend>
          </LegendStack>
        </ChartRow>
        <TinyText $size={4.2} $lh={6} $align="center" $m="13px 0 0">Variance Amount</TinyText>
        <BigNumber $size={9.6} $lh={12} $bold $align="center" $top={3}>₹-1,782</BigNumber>
        <LineRows $top={2}>
          <LineRow><span>Aug</span><span>₹0</span></LineRow>
          <LineRow><span>Sep</span><span>₹0</span></LineRow>
          <LineRow><span>Oct</span><span>₹0</span></LineRow>
        </LineRows>
        <ActionBar $h={9} $size={4.4} $m="7px 1px 0 -1px">0 Open Purchase Requests</ActionBar>
      </FinanceCard>
      <FinanceStack>
        <FinanceCard $w={120} $h={67}>
          <SmallTitle $size={5.6}>Bank &amp; Cash</SmallTitle>
          <TinyText $size={4.2} $lh={6} $m="3px 0 0">Total Balance as of 07-Oct-23</TinyText>
          <BigNumber $size={8} $bold $top={3}>₹331,374</BigNumber>
          <LineRows $top={1}>
            <LineRow $lh={8}><span>SBI</span><span>₹-77,700</span></LineRow>
            <LineRow $lh={8}><span>Petty Cash</span><span>₹409,074</span></LineRow>
          </LineRows>
        </FinanceCard>
        <FinanceCard $w={120} $h={33} $p="4px 10px">
          <SmallTitle $size={5.6}>General Ledger</SmallTitle>
          <LedgerButtons>
            <LedgerButton $w={26}>Trial Balance</LedgerButton>
            <LedgerButton $w={38}>Financial Statements</LedgerButton>
          </LedgerButtons>
        </FinanceCard>
      </FinanceStack>
    </FinanceBox>
  );
}

const MANAGE_CARDS = [
  { title: 'Facility & Activity', rows: [['0', 'Bookings this month'], ['0', 'Awaiting Payment']], action: 'Book Facilities', top: 31 },
  { title: 'Projects & Meetings', rows: [['0', 'Open & In Progress Projects'], ['0', 'Open Meetings'], ['0', 'Open Tasks']], action: 'Create Meeting', top: 12 },
  { title: 'Assets & Inventory', rows: [['0', 'Total Active Assets'], ['2', 'Total Active Inventory']] },
];

const MANAGE_LINKS = ['Vendor Master', 'Admin Files', 'Online Ballot', 'Admin Reports', 'Admin Forums'];

function ManagementSection () {
  return (
    <ManageBox>
      <ManageTitle>MANAGEMENT</ManageTitle>
      <ManageGrid>
        {MANAGE_CARDS.map((card) => (
          <ManageCard key={card.title}>
            <SmallTitle>{card.title}</SmallTitle>
            {card.rows.map(([num, label], i) => (
              <ManageLine key={label} $first={i === 0}>
                <ManageNum>{num}</ManageNum>
                <ManageLabel>{label}</ManageLabel>
              </ManageLine>
            ))}
            {card.action && <ActionBar $h={13} $m={`${card.top}px 5px 0 4px`} $size={5}>{card.action}</ActionBar>}
          </ManageCard>
        ))}
        {MANAGE_LINKS.map((name) => (
          <ManageCard key={name}><SmallTitle>{name}</SmallTitle></ManageCard>
        ))}
      </ManageGrid>
    </ManageBox>
  );
}

function DashboardFigure () {
  return (
    <Figure>
      <AppHeader>
        <HLogo />
        <PanelName>Admin Panel</PanelName>
        <Caret />
        <HeaderLink $size={15.5} $color="#d5e34a" $ml={585}>My Habitat+</HeaderLink>
        <HeaderLink $size={13.7} $color="#fff" $ml={113}>Hello First Name !</HeaderLink>
        <HeaderLink $size={13.7} $color="#eef03c" $ml={32}>Logout</HeaderLink>
      </AppHeader>
      <AppBody>
        <Sidebar>
          <DashIcon />
          <SideName>Dashboard</SideName>
        </Sidebar>
        <LeftCol>
          <QuickRow>
            <NotifyCard>
              <NotifyBadge><PlaneIcon /></NotifyBadge>
              <NotifyText>
                Instant Notification
                <NotifySub>Send Instant App Notification</NotifySub>
              </NotifyText>
              <Slot $w={22}><TinyChevron /></Slot>
            </NotifyCard>
            <PostCard>
              <FlagIcon />
              <PostLabel>Post Announcements</PostLabel>
              <Slot $w={14} $ml={17}><BigChevron /></Slot>
            </PostCard>
          </QuickRow>
          <TrackerRow>
            <TrackerCol $w={219} $top={0}>
              <Heading>Members</Heading>
              <ShotCard $w={185} $h={132} $m="12px 0 0 25px">
                <ShotBody $px={15}>
                  <SmallTitle>Units &amp; Users</SmallTitle>
                  <StatPair $top={7}>
                    <Stat $w={86}>
                      <BuildingIcon kind="users" />
                      <TinyText $size={5.4} $m="3px 0 0">Unique Users</TinyText>
                      <BigNumber $size={15.5}>187</BigNumber>
                    </Stat>
                    <Stat $w={70}>
                      <BuildingIcon kind="units" />
                      <TinyText $size={5.4} $m="1px 0 0">Total Units</TinyText>
                      <BigNumber $size={15.5}>90</BigNumber>
                    </Stat>
                  </StatPair>
                  <TinyText $lh={10.5} $m="2px 0 0" $color="#aaa">3 Unapproved Users</TinyText>
                  <TinyText $lh={10.5} $color="#aaa">4 Admins</TinyText>
                  <TinyText $lh={10.5} $color="#aaa">11 Never Logged In</TinyText>
                </ShotBody>
              </ShotCard>
            </TrackerCol>
            <TrackerCol $w={195} $top={2}>
              <Heading>
                <Squiggle>HelpDesk</Squiggle>
                {' '}
                Tracker
              </Heading>
              <ShotCard $w={182} $h={140} $m="6px 0 0 11px">
                <ShotBody $px={14}>
                  <SmallTitle>Helpdesk Tracker</SmallTitle>
                  <TinyText $size={5.8} $m="7px 0 0">Open Requests</TinyText>
                  <StatPair $top={12}>
                    <Stat $w={50} $center>
                      <RingIcon />
                      <TinyText $size={5}>Personal</TinyText>
                      <BigNumber $size={16} $lh={16} $color="#f4664a">50</BigNumber>
                    </Stat>
                    <Stat $w={44} $ml={46} $center>
                      <RingIcon />
                      <TinyText $size={5}>Community</TinyText>
                      <BigNumber $size={16} $lh={16} $color="#f4664a">25</BigNumber>
                    </Stat>
                  </StatPair>
                  <ActionBar $h={16} $m="7px 0 0 -2px" $size={5.6}>Lodge New Request</ActionBar>
                </ShotBody>
              </ShotCard>
            </TrackerCol>
          </TrackerRow>
          <Heading $size={15.6} $track={0.3} $m="5px 0 0 62px">Finance &amp; Statistics</Heading>
          <FinanceSection />
          <Heading $size={15.6} $track={0.3} $m="22px 0 0 62px">Habitat Advertisement</Heading>
        </LeftCol>
        <RightCol>
          <Heading $m="0 0 0 17px">Habitat Advertisement</Heading>
          <ReservedBox><ReservedText>Reserved Space</ReservedText></ReservedBox>
          <Heading $m="15px 0 0">Management Related</Heading>
          <ManagementSection />
        </RightCol>
      </AppBody>
      <Rule />
      <Caption>
        Figure 15: Society Admin
        {' '}
        <Mark>Dashboard</Mark>
      </Caption>
    </Figure>
  );
}

export default function App () {
  return (
    <Screen>
      <GlobalStyle />
      <TabStrip>
        <Slot $w={50} $ml={5}><WorkspacesIcon /></Slot>
        <Slot $w={40}><VerticalTabsIcon /></Slot>
        <Tab>
          <PdfIcon />
          <TabTitle>HabitatPlush_Details_Check_and_Update_V1.1.pdf</TabTitle>
          <Slot $w={20} $ml={9}><X size={16} strokeWidth={1.6} /></Slot>
        </Tab>
        <Slot $w={44}><Plus size={22} strokeWidth={1.4} /></Slot>
        <WindowControls>
          <Slot $w={58}><Minus size={14} strokeWidth={1.2} /></Slot>
          <Slot $w={58}>
            <svg width="14" height="14" viewBox="0 0 14 14" fill="none" stroke="#1c1c1c"><rect x="2.500" y="3.500" width="7" height="10" rx="1" /><path d="M5 1.500h5a1.500 1.500 0 0 1 1.500 1.500v8" /></svg>
          </Slot>
          <Slot $w={58}><X size={20} strokeWidth={1} /></Slot>
        </WindowControls>
      </TabStrip>
      <AddressRow>
        <Slot $w={50}><BackIcon /></Slot>
        <Slot $w={43}><RefreshIcon /></Slot>
        <Pill>
          <FileChip><InfoIcon />File</FileChip>
          <Url>C:/Users/lenovo/Downloads/HabitatPlush_Details_Check_and_Update_V1.1.pdf</Url>
          <PillIcons>
            <ReadIcon><ReadDocIcon /></ReadIcon>
            <Slot $w={40} $ml={6} $color="#666"><Thin icon={ZoomIn} size={22} /></Slot>
            <Slot $w={42} $color="#555"><Thin icon={Star} size={22} /></Slot>
          </PillIcons>
        </Pill>
        <Slot $w={44} $ml={9}><Thin icon={Columns2} size={22} /></Slot>
        <Slot $w={46}><FavoritesIcon /></Slot>
        <Slot $w={46}><Thin icon={CopyPlus} size={22} /></Slot>
        <Slot $w={44}><HealthIcon /></Slot>
        <SyncPill>
          Not syncing
          <Avatar><AvatarFigure /></Avatar>
        </SyncPill>
        <Slot $w={44} $ml={3} $size={18}>···</Slot>
        <Slot $w={52}><CopilotIcon /></Slot>
      </AddressRow>
      <Pdf>
        <PdfMain>
          <Toolbars />
          <FindBar>
            Dashboard
            <FindCount>70/99</FindCount>
            <FindDivider />
            <Slot $w={40} $ml={9}><ChevronUp size={22} strokeWidth={1.1} /></Slot>
            <Slot $w={40}><ChevronDown size={22} strokeWidth={1.1} /></Slot>
            <Slot $w={40}><X size={22} strokeWidth={1.1} /></Slot>
          </FindBar>
          <Viewer>
            <Page>
              <DashboardFigure />
            </Page>
          </Viewer>
        </PdfMain>
        <Scrollbar>
          <ScrollArrow $top={11} />
          {SCROLL_MARKS.map((top, i) => <ScrollMark key={i} style={{ top }} $thick={i === 6} />)}
          <ScrollThumb />
          <ScrollArrow $top={914} $down />
        </Scrollbar>
      </Pdf>
      <Taskbar>
        <Slot $w={60}><WindowsLogo /></Slot>
        <TaskSearch>
          <SearchGlass><Thin icon={Search} size={24} /></SearchGlass>
          <SearchHint>Type here to search</SearchHint>
          <RadioDoodle />
        </TaskSearch>
        <TaskApp $w={64} $pr={4}>
          <svg width="22" height="24" viewBox="0 0 22 24" fill="none" stroke="#fff" strokeWidth="1.200"><path d="M1 2h10M1 22h10M1 7h12v10H1M17 2v20M20 2v20" /></svg>
        </TaskApp>
        {TASK_APPS.map((app) => (
          <TaskApp key={app.id} $w={app.w} $open={app.open} $active={app.active}>{app.logo}</TaskApp>
        ))}
        <Tray>
          <WeatherIcon />
          <Slot $w={45} $ml={9} $size={17}>31°C</Slot>
          <Slot $w={50} $ml={2} $size={17}>Haze</Slot>
          <Slot $w={24} $ml={21}><ChevronUp size={22} strokeWidth={1.3} /></Slot>
          <Slot $w={24} $ml={7}><MeetIcon /></Slot>
          <Slot $w={26} $ml={4}><CloudIcon /></Slot>
          <TraySlot $ml={6}><MeterIcon /></TraySlot>
          <Slot $w={24} $ml={5}><BatteryIcon /></Slot>
          <Slot $w={24} $ml={6}><WifiIcon /></Slot>
          <Slot $w={24} $ml={4}><SpeakerIcon /></Slot>
          <Lang $ml={13} $w={30}>ENG<br />IN</Lang>
          <Lang $ml={5} $w={96}>12:03<br />13-02-2025</Lang>
          <Slot $w={40} $ml={4}>
            <NoteIcon />
            <NotifyCount>7</NotifyCount>
          </Slot>
        </Tray>
      </Taskbar>
    </Screen>
  );
}
